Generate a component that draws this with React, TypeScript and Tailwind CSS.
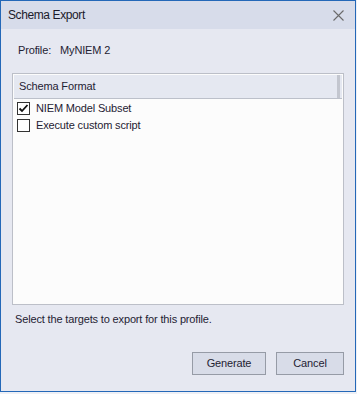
import React from "react";

function Check({ checked }: { checked: boolean }) {
  return (
    <div className="w-[13px] h-[13px] border border-[#333333] bg-white flex items-center justify-center shrink-0">
      {checked && (
        <svg width="11" height="11" viewBox="0 0 11 11">
          <path d="M1.5 5.5 L4 8 L9.5 2" fill="none" stroke="#111" strokeWidth="1.8" />
        </svg>
      )}
    </div>
  );
}

export default function App() {
  const font = { fontFamily: '"Liberation Sans", Arial, sans-serif' };
  return (
    <div className="w-[357px] h-[394px] bg-[#eef0f6]" style={font}>
      <div className="w-[356px] h-[392px] border border-[#2468b8] bg-[#e6e8f1] flex flex-col text-[#1f2233]">
        <div className="h-[28px] bg-[#d7dcea] flex items-center pl-[7px] pr-[12px] justify-between">
          <span className="text-[12px] tracking-[-0.4px] text-[#1b1b2b]">Schema Export</span>
          <svg width="11" height="11" viewBox="0 0 11 11" className="mr-[-1px]">
            <path d="M0.5 0.5 L10.5 10.5 M10.5 0.5 L0.5 10.5" stroke="#6a6a6a" strokeWidth="1.1" />
          </svg>
        </div>
        <div className="flex-1 flex flex-col px-[11px] tracking-[-0.15px]">
          <div className="mt-[14px] h-[14px] leading-[14px] text-[11px] pl-[6px] flex">
            <span>Profile:</span>
            <span className="ml-[9px]">MyNIEM 2</span>
          </div>
          <div className="mt-[16px] h-[232px] border border-[#bcbfc8] bg-[#fcfcfc] p-[1px] flex flex-col">
            <div className="h-[24px] bg-[#e5e8f1] border-b border-[#bcc0ca] flex items-center justify-between">
              <span className="text-[11px] pl-[5px]">Schema Format</span>
              <div className="w-[3px] h-full bg-[#c3c6cf] mr-[2px]" />
            </div>
            <div className="flex flex-col pl-[3px] pt-[0px]">
              <div className="h-[17px] flex items-center gap-[6px] pt-[1px]">
                <Check checked={true} />
                <span className="text-[11px]">NIEM Model Subset</span>
              </div>
              <div className="h-[17px] flex items-center gap-[6px] pt-[1px]">
                <Check checked={false} />
                <span className="text-[11px]">Execute custom script</span>
              </div>
            </div>
          </div>
          <div className="mt-[7px] h-[14px] leading-[14px] text-[11px] pl-[3px]">
            Select the targets to export for this profile.
          </div>
          <div className="mt-[26px] flex justify-end gap-[10px]">
            <button className="w-[74px] h-[23px] bg-[#d8dce8] border border-[#969ba6] text-[11px] text-[#1f2233]">
              Generate
            </button>
            <button className="w-[68px] h-[23px] bg-[#d8dce8] border border-[#969ba6] text-[11px] text-[#1f2233]">
              Cancel
            </button>
          </div>
        </div>
      </div>
    </div>
  );
}
